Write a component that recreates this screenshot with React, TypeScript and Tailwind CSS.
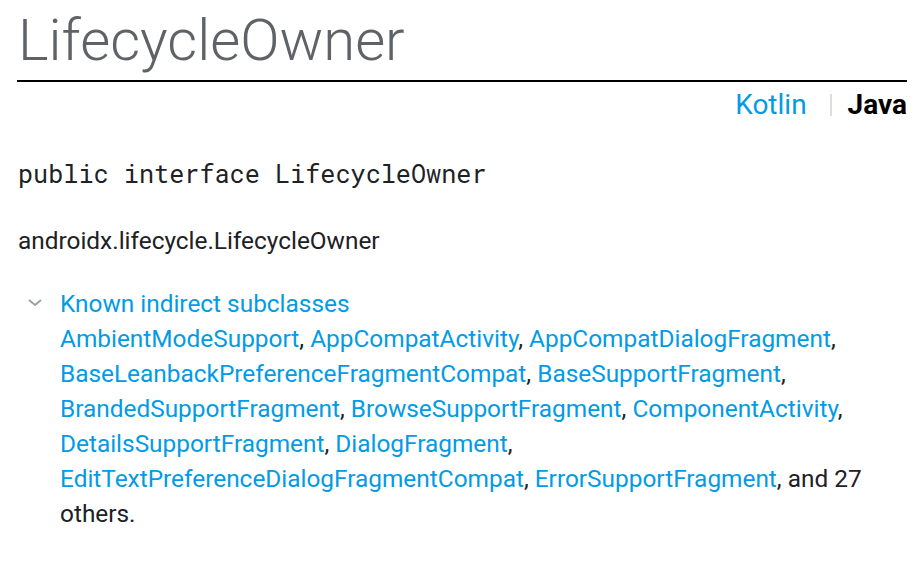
const subclasses = [
  'AmbientModeSupport',
  'AppCompatActivity',
  'AppCompatDialogFragment',
  'BaseLeanbackPreferenceFragmentCompat',
  'BaseSupportFragment',
  'BrandedSupportFragment',
  'BrowseSupportFragment',
  'ComponentActivity',
  'DetailsSupportFragment',
  'DialogFragment',
  'EditTextPreferenceDialogFragmentCompat',
  'ErrorSupportFragment',
];

export default function App() {
  return (
    <div
      className="w-[920px] h-[562px] overflow-hidden bg-white pl-[18px] pr-[13px] text-[#202124]"
      style={{ fontFamily: 'Roboto, "Noto Sans", sans-serif' }}
    >
      <h1 className="text-[58px] font-light leading-[80px] text-[#5f6368] border-b-2 border-black -ml-[1px] pl-[1px] h-[82px]">
        LifecycleOwner
      </h1>

      <div className="flex justify-end items-center h-[46px] text-[28px]">
        <a className="text-[#039be5]">Kotlin</a>
        <span className="ml-[23px] mr-[16px] w-[2px] h-[22px] bg-[#dadce0]" />
        <span className="font-bold text-black">Java</span>
      </div>

      <pre
        className="mt-[31px] text-[25.2px] leading-[30px] text-[#202124]"
        style={{ fontFamily: '"Roboto Mono", "DejaVu Sans Mono", monospace' }}
      >
        public interface LifecycleOwner
      </pre>

      <p className="mt-[34px] text-[24.4px] leading-[35px]">androidx.lifecycle.LifecycleOwner</p>

      <div className="mt-[28px] flex">
        <div className="w-[42px] pt-[11px] pl-[8px]">
          <svg width="18" height="12" viewBox="0 0 18 12" fill="none">
            <path d="M3 3l6 5 6-5" stroke="#9aa0a6" strokeWidth="2" />
          </svg>
        </div>
        <div className="flex-1 text-[24.4px] leading-[35px]">
          <div className="text-[#039be5]">Known indirect subclasses</div>
          <div>
            {subclasses.map((s) => (
              <span key={s}>
                <a className="text-[#039be5]">{s}</a>,{' '}
              </span>
            ))}
            and 27 others.
          </div>
        </div>
      </div>
    </div>
  );
}
